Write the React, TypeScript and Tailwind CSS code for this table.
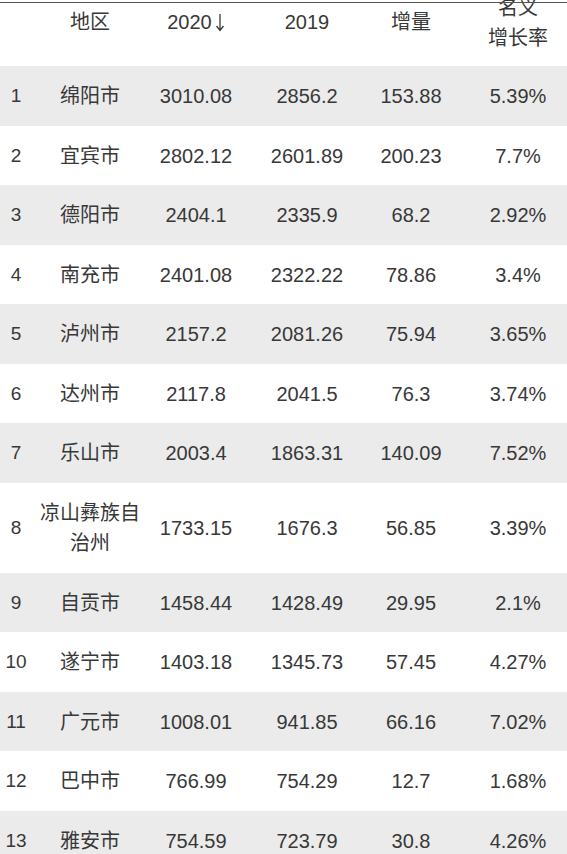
import React from 'react';

type Row = {
  rank: number;
  region: string[];
  y2020: string;
  y2019: string;
  delta: string;
  rate: string;
};

const rows: Row[] = [
  { rank: 1, region: ['绵阳市'], y2020: '3010.08', y2019: '2856.2', delta: '153.88', rate: '5.39%' },
  { rank: 2, region: ['宜宾市'], y2020: '2802.12', y2019: '2601.89', delta: '200.23', rate: '7.7%' },
  { rank: 3, region: ['德阳市'], y2020: '2404.1', y2019: '2335.9', delta: '68.2', rate: '2.92%' },
  { rank: 4, region: ['南充市'], y2020: '2401.08', y2019: '2322.22', delta: '78.86', rate: '3.4%' },
  { rank: 5, region: ['泸州市'], y2020: '2157.2', y2019: '2081.26', delta: '75.94', rate: '3.65%' },
  { rank: 6, region: ['达州市'], y2020: '2117.8', y2019: '2041.5', delta: '76.3', rate: '3.74%' },
  { rank: 7, region: ['乐山市'], y2020: '2003.4', y2019: '1863.31', delta: '140.09', rate: '7.52%' },
  { rank: 8, region: ['凉山彝族自', '治州'], y2020: '1733.15', y2019: '1676.3', delta: '56.85', rate: '3.39%' },
  { rank: 9, region: ['自贡市'], y2020: '1458.44', y2019: '1428.49', delta: '29.95', rate: '2.1%' },
  { rank: 10, region: ['遂宁市'], y2020: '1403.18', y2019: '1345.73', delta: '57.45', rate: '4.27%' },
  { rank: 11, region: ['广元市'], y2020: '1008.01', y2019: '941.85', delta: '66.16', rate: '7.02%' },
  { rank: 12, region: ['巴中市'], y2020: '766.99', y2019: '754.29', delta: '12.7', rate: '1.68%' },
  { rank: 13, region: ['雅安市'], y2020: '754.59', y2019: '723.79', delta: '30.8', rate: '4.26%' },
];

// column widths follow the screenshot: rank, region, 2020, 2019, delta, rate
const cols = 'grid grid-cols-[32px_116px_96px_126px_82px_132px]';

const SortArrow = () => (
  <svg width="10" height="20" viewBox="0 0 10 20" className="inline-block ml-[3px] -mt-[3px] align-middle">
    <path d="M5 2 V18 M1.5 14 L5 18.5 L8.5 14" fill="none" stroke="#383838" strokeWidth="1.3" />
  </svg>
);

const App = () => {
  return (
    <div
      className="relative w-[567px] h-[854px] overflow-hidden bg-white text-[#383838] text-[20px] leading-[30px]"
      style={{ fontFamily: '"Liberation Sans", "Noto Sans CJK SC", sans-serif' }}
    >
      {/* thin crop line across the top */}
      <div className="absolute left-0 right-0 top-[2px] h-px bg-[#555]" />

      {/* header */}
      <div className={`${cols} h-[66px] items-start text-center`}>
        <div />
        <div className="pt-[7px]">地区</div>
        <div className="pt-[7px] whitespace-nowrap">
          2020
          <SortArrow />
        </div>
        <div className="pt-[7px]">2019</div>
        <div className="pt-[7px]">增量</div>
        <div className="-mt-[7px]">
          <div>名义</div>
          <div>增长率</div>
        </div>
      </div>

      {rows.map((r, i) => (
        <div
          key={r.rank}
          className={`${cols} items-center text-center py-[15px] ${i % 2 === 0 ? 'bg-[#ebebeb]' : 'bg-white'} ${
            r.region.length > 1 ? 'h-[90px]' : 'h-[59.5px]'
          }`}
        >
          <div className="text-[19px]">{r.rank}</div>
          <div>
            {r.region.map((line) => (
              <div key={line}>{line}</div>
            ))}
          </div>
          <div>{r.y2020}</div>
          <div>{r.y2019}</div>
          <div>{r.delta}</div>
          <div>{r.rate}</div>
        </div>
      ))}
    </div>
  );
};

export default App;
